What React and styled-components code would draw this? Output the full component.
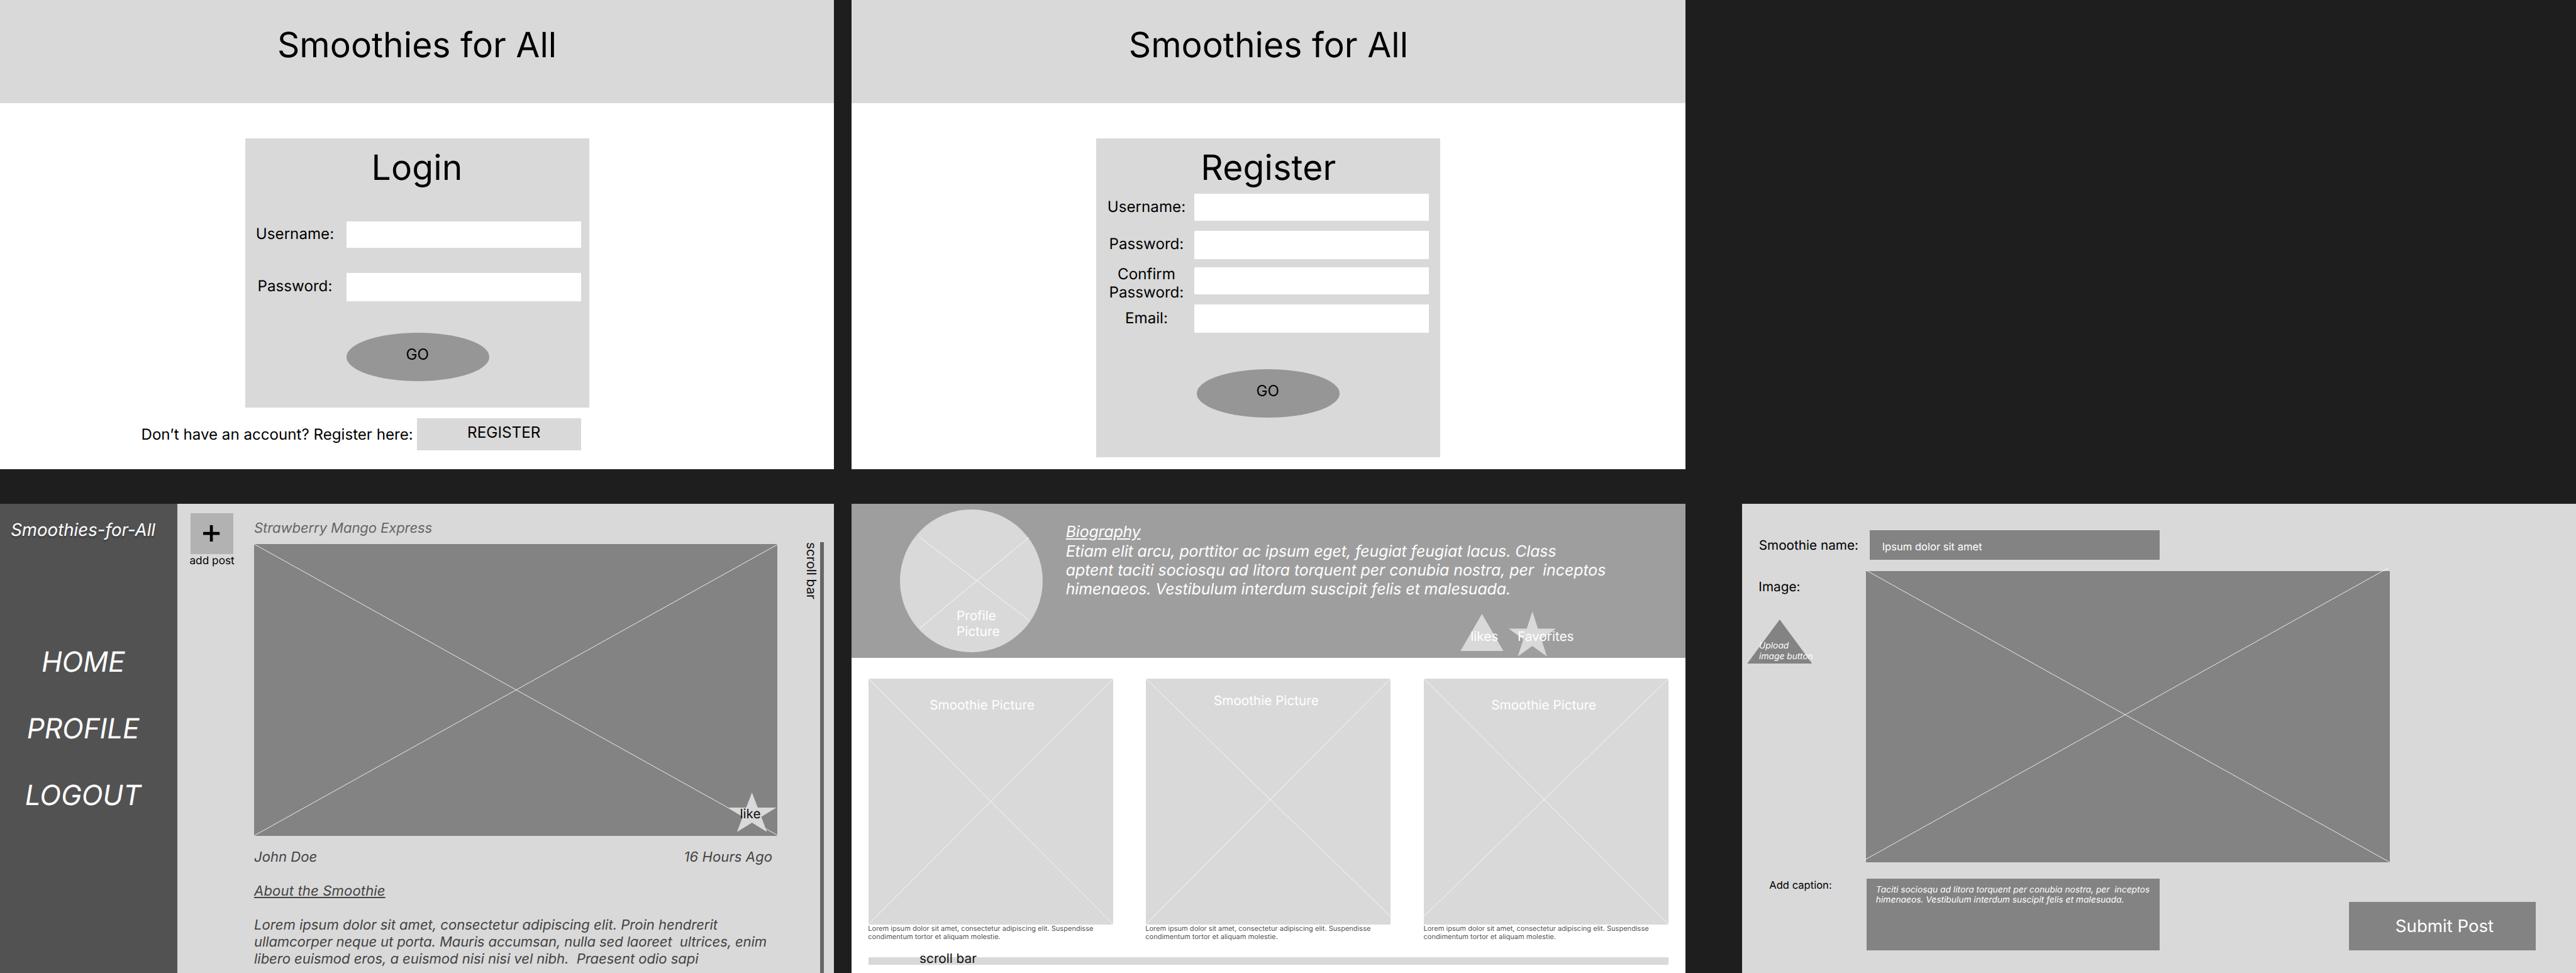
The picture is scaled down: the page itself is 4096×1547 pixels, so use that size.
import React from "react";
import styled, { createGlobalStyle, css } from "styled-components";

const SCALE = 4096 / 5930;
const u = (n) => `${(n * SCALE).toFixed(3)}px`;

const GlobalStyle = createGlobalStyle`
  *, *::before, *::after { box-sizing: border-box; }
  html, body { margin: 0; padding: 0; background: #1e1e1e; }
  body {
    width: 4096px;
    height: 1547px;
    overflow: hidden;
    font-family: Inter, "Liberation Sans", sans-serif;
    text-rendering: geometricPrecision;
    color: #000;
  }
`;

const type = (size, line = size * 1.21) => css`
  font-size: ${u(size)};
  line-height: ${u(line)};
  white-space: pre;
`;

/* ---------- board ---------- */

const Board = styled.main`
  width: 4096px;
  height: 1547px;
  display: flex;
  flex-direction: column;
  gap: ${u(80)};
  overflow: hidden;
`;

const BoardRow = styled.div`
  display: flex;
  gap: ${u(40)};
  flex: none;
`;

const Frame = styled.section`
  width: ${u(1920)};
  height: ${u(1080)};
  flex: none;
  display: flex;
  flex-direction: ${(p) => p.$direction || "column"};
  background: ${(p) => p.$bg || "#fff"};
  margin-left: ${(p) => u(p.$indent || 0)};
  overflow: hidden;
`;

const Line = styled.span`
  display: block;
  letter-spacing: ${(p) => p.$track || 0}em;
`;

/* ---------- login and register ---------- */

const AppHeader = styled.header`
  height: ${u(237)};
  flex: none;
  padding-top: ${u(56)};
  background: #d9d9d9;
  text-align: center;
`;

const Title = styled.h1`
  ${type(80)}
  margin: 0;
  font-weight: 400;
  text-align: center;
`;

const CardTitle = styled(Title)`
  letter-spacing: 0.003em;
`;

const AuthCard = styled.form`
  width: ${u(792)};
  height: ${(p) => u(p.$height)};
  margin: ${u(82)} auto 0;
  padding-top: ${u(20.3)};
  flex: none;
  display: flex;
  flex-direction: column;
  background: #d9d9d9;
`;

const FieldRow = styled.label`
  display: flex;
  align-items: flex-start;
  height: ${(p) => u(p.$height)};
  margin-top: ${(p) => u(p.$top)};
`;

const FieldLabel = styled.span`
  ${type(35)}
  width: ${(p) => u(p.$width)};
  padding-left: ${(p) => u(p.$start || 0)};
  padding-right: ${(p) => u(p.$end || 0)};
  margin-top: ${(p) => u(p.$shift)};
  flex: none;
  text-align: center;
`;

const FieldBox = styled.span`
  width: ${u(540)};
  height: 100%;
  background: #fff;
`;

const GoButton = styled.button`
  ${type(35)}
  width: ${u(329)};
  height: ${u(111)};
  margin: ${(p) => u(p.$top)} 0 0 ${(p) => u(p.$left)};
  padding: 0 ${u(2)} ${u(11)} 0;
  border: 0;
  border-radius: 50%;
  background: #969696;
  color: #000;
  font-family: inherit;
`;

const SignupRow = styled.div`
  display: flex;
  align-items: flex-start;
  margin-top: ${u(25)};
  padding-left: ${u(325)};
`;

const SignupPrompt = styled.span`
  ${type(34.95)}
  width: ${u(635)};
  margin-top: ${u(15.3)};
`;

const SignupButton = styled.button`
  ${type(35.2)}
  width: ${u(377.5)};
  height: ${u(73)};
  padding: 0 0 ${u(7)} ${u(22.5)};
  border: 0;
  background: #d9d9d9;
  color: #000;
  font-family: inherit;
`;

/* ---------- feed ---------- */

const Sidebar = styled.aside`
  width: ${u(408)};
  padding: ${u(36.6)} ${u(25.5)} 0 0;
  flex: none;
  display: flex;
  flex-direction: column;
  align-items: center;
  background: #525252;
  color: #fff;
  font-style: italic;
`;

const Brand = styled.div`
  ${type(40)}
  text-shadow: 0 ${u(4)} ${u(4)} rgba(0, 0, 0, 0.25);
`;

const SideNav = styled.nav`
  display: flex;
  flex-direction: column;
  align-items: center;
  gap: ${u(76.6)};
  margin-top: ${u(239.8)};
`;

const NavItem = styled.a`
  ${type(64)}
  letter-spacing: -0.004em;
`;

const AddPost = styled.div`
  width: ${u(177)};
  padding: ${u(22)} ${u(17)} 0 0;
  flex: none;
  display: flex;
  flex-direction: column;
  align-items: center;
`;

const AddButton = styled.button`
  width: ${u(98)};
  height: ${u(94)};
  padding: 0 ${u(1.5)} ${u(2)} 0;
  border: 0;
  display: flex;
  align-items: center;
  justify-content: center;
  background: #b2b2b2;
`;

const PlusIcon = styled.svg`
  width: ${u(38)};
  height: ${u(38)};
  display: block;
`;

const AddCaption = styled.span`
  ${type(25)}
  margin-top: ${u(1.2)};
`;

const Post = styled.article`
  width: ${u(1205)};
  padding-top: ${u(37.3)};
  flex: none;
  color: #434343;
  font-style: italic;
`;

const PostTitle = styled.div`
  ${type(32)}
  color: #666;
  letter-spacing: -0.005em;
`;

const PostImage = styled.div`
  position: relative;
  height: ${u(671.3)};
  margin-top: ${u(17)};
  background: #838383;
`;

const PostMeta = styled.div`
  ${type(32)}
  display: flex;
  justify-content: space-between;
  margin-top: ${u(30.5)};
  padding-right: ${u(12)};
`;

const PostHeading = styled.div`
  ${type(32)}
  margin-top: ${u(39.3)};
  letter-spacing: 0.006em;
  text-decoration: underline;
`;

const PostBody = styled.div`
  ${type(32, 39)}
  margin-top: ${u(39.3)};
`;

const LikeBadge = styled.div`
  position: absolute;
  left: ${u(1090)};
  top: ${u(570.7)};
  width: ${u(112)};
  height: ${u(91)};
  color: #111;
  font-style: normal;
`;

const ScrollRail = styled.div`
  display: flex;
  align-items: flex-start;
  padding: ${u(88)} 0 0 ${u(56.5)};
`;

const ScrollRailLabel = styled.span`
  ${type(30)}
  width: ${u(41.5)};
  padding-right: ${u(1.5)};
  writing-mode: vertical-rl;
  color: #111;
`;

const ScrollRailTrack = styled.span`
  width: ${u(8)};
  height: ${u(992)};
  background: #666;
`;

/* ---------- profile ---------- */

const ProfileHeader = styled.header`
  height: ${u(354)};
  flex: none;
  display: flex;
  background: #9e9e9e;
  color: #fff;
`;

const Avatar = styled.div`
  position: relative;
  width: ${u(328)};
  height: ${u(328)};
  margin: ${u(13)} 0 0 ${u(112)};
  flex: none;
  border-radius: 50%;
  background: #d9d9d9;
`;

const Bio = styled.div`
  margin-left: ${u(53.6)};
  padding-top: ${u(42)};
`;

const BioText = styled.div`
  ${type(36, 43.9)}
  font-style: italic;
`;

const BioHeading = styled(Line)`
  text-decoration: underline;
`;

const BadgeRow = styled.div`
  display: flex;
  align-items: flex-start;
  gap: ${u(11.3)};
  padding-left: ${u(908.2)};
  margin-top: ${u(29.4)};
`;

const Badge = styled.div`
  position: relative;
  width: ${(p) => u(p.$width)};
  height: ${(p) => u(p.$height)};
  margin-top: ${(p) => u(p.$top || 0)};
`;

const Shape = styled.svg`
  display: block;
  width: 100%;
  height: 100%;
`;

const Overlay = styled.span`
  ${(p) => type(p.$size || 30)}
  position: absolute;
  left: ${(p) => u(p.$x)};
  top: ${(p) => u(p.$y)};
`;

const Gallery = styled.div`
  display: grid;
  grid-template-columns: ${u(638.4)} ${u(640.3)} ${u(563.3)};
  padding: ${u(48.3)} 0 0 ${u(39.3)};
`;

const Card = styled.figure`
  width: ${u(563)};
  margin: 0;
`;

const CardPicture = styled.div`
  position: relative;
  height: ${u(565.4)};
  background: #d9d9d9;
  color: #fff;
`;

const CardCaption = styled.figcaption`
  ${type(16)}
  margin: ${u(0.6)} 0 0 ${u(-1)};
  color: #525252;
`;

const GalleryScroll = styled.div`
  position: relative;
  width: ${u(1842)};
  height: ${u(17.5)};
  margin: ${u(36.8)} 0 0 ${u(39.3)};
  background: #d9d9d9;
  color: #111;
`;

/* ---------- new post ---------- */

const FormLine = styled.div`
  display: flex;
  align-items: flex-start;
  padding-top: ${(p) => u(p.$top)};
`;

const FormLabel = styled.div`
  ${(p) => type(p.$size)}
  width: ${(p) => u(p.$width)};
  padding-left: ${(p) => u(p.$start)};
  margin-top: ${(p) => u(p.$shift)};
  flex: none;
`;

const NameInput = styled.div`
  ${type(24)}
  width: ${u(668.5)};
  height: ${u(68)};
  padding: ${u(23.3)} 0 0 ${u(29)};
  background: #838383;
  color: #fff;
`;

const UploadColumn = styled.div`
  width: ${u(286)};
  padding-top: ${u(17)};
  flex: none;
`;

const UploadButton = styled.div`
  position: relative;
  width: ${u(150)};
  height: ${u(101.7)};
  margin: ${u(58.5)} 0 0 ${u(11.5)};
  color: #fff;
  font-style: italic;
`;

const ImagePreview = styled.div`
  width: ${u(1205)};
  height: ${u(671.3)};
  background: #838383;
`;

const CaptionInput = styled.div`
  ${type(20)}
  width: ${u(675)};
  height: ${u(166)};
  padding: ${u(14.5)} 0 0 ${u(21.5)};
  background: #838383;
  color: #fff;
  font-style: italic;
`;

const SubmitButton = styled.button`
  ${type(40)}
  width: ${u(429)};
  height: ${u(112)};
  margin: ${u(54)} 0 0 ${u(436)};
  padding: 0 0 0 ${u(10)};
  border: 0;
  background: #838383;
  color: #fff;
  font-family: inherit;
`;

/* ---------- drawings ---------- */

const CrossSvg = styled.svg`
  display: block;
  width: 100%;
  height: 100%;
  overflow: visible;
  stroke: #fff;
  stroke-width: 1.2;
`;

function Cross({ w, h, lines }) {
  return (
    <CrossSvg viewBox={`0 0 ${w} ${h}`} preserveAspectRatio="none">
      {lines.map(([x1, y1, x2, y2]) => (
        <line key={`${x1}-${y1}`} x1={x1} y1={y1} x2={x2} y2={y2} />
      ))}
    </CrossSvg>
  );
}

function Star() {
  return (
    <Shape viewBox="0 0 1000 1000" preserveAspectRatio="none">
      <polygon
        fill="#d9d9d9"
        points="500,0 618,382 1000,382 691,618 809,1000 500,764 191,1000 309,618 0,382 382,382"
      />
    </Shape>
  );
}

function Triangle({ fill }) {
  return (
    <Shape viewBox="0 0 100 100" preserveAspectRatio="none">
      <polygon fill={fill} points="50,0 100,100 0,100" />
    </Shape>
  );
}

function Plus() {
  return (
    <PlusIcon viewBox="0 0 38 38">
      <path d="M19 0V38M0 19H38" stroke="#000" strokeWidth="6.8" />
    </PlusIcon>
  );
}

/* ---------- screens ---------- */

function LoginScreen() {
  return (
    <Frame>
      <AppHeader>
        <Title>Smoothies for All</Title>
      </AppHeader>
      <AuthCard $height={619}>
        <CardTitle>Login</CardTitle>
        <FieldRow $top={72.9} $height={62}>
          <FieldLabel $width={233.5} $end={3.5} $shift={7.8}>Username:</FieldLabel>
          <FieldBox />
        </FieldRow>
        <FieldRow $top={57} $height={65}>
          <FieldLabel $width={233.5} $end={3.5} $shift={9.8}>Password:</FieldLabel>
          <FieldBox />
        </FieldRow>
        <GoButton type="button" $top={73} $left={233.5}>GO</GoButton>
      </AuthCard>
      <SignupRow>
        <SignupPrompt>Don’t have an account? Register here:</SignupPrompt>
        <SignupButton>REGISTER</SignupButton>
      </SignupRow>
    </Frame>
  );
}

const registerFields = [
  { label: "Username:", top: 9.9, height: 62, shift: 8.3 },
  { label: "Password:", top: 23, height: 65, shift: 9.8 },
  { label: "Confirm\nPassword:", top: 20, height: 62, shift: -6.4 },
  { label: "Email:", top: 23, height: 65, shift: 9.8 },
];

function RegisterScreen() {
  return (
    <Frame>
      <AppHeader>
        <Title>Smoothies for All</Title>
      </AppHeader>
      <AuthCard $height={733}>
        <CardTitle>Register</CardTitle>
        {registerFields.map((f) => (
          <FieldRow key={f.label} $top={f.top} $height={f.height}>
            <FieldLabel $width={226} $start={4.5} $shift={f.shift}>{f.label}</FieldLabel>
            <FieldBox />
          </FieldRow>
        ))}
        <GoButton type="button" $top={84} $left={231}>GO</GoButton>
      </AuthCard>
    </Frame>
  );
}

function FeedScreen() {
  return (
    <Frame $direction="row" $bg="#d9d9d9">
      <Sidebar>
        <Brand>Smoothies-for-All</Brand>
        <SideNav>
          <NavItem>HOME</NavItem>
          <NavItem>PROFILE</NavItem>
          <NavItem>LOGOUT</NavItem>
        </SideNav>
      </Sidebar>
      <AddPost>
        <AddButton aria-label="add post">
          <Plus />
        </AddButton>
        <AddCaption>add post</AddCaption>
      </AddPost>
      <Post>
        <PostTitle>Strawberry Mango Express</PostTitle>
        <PostImage>
          <Cross w={1205} h={671} lines={[[0, 0, 1205, 670], [0, 671, 1205, 1]]} />
          <LikeBadge>
            <Star />
            <Overlay $x={28.3} $y={31}>like</Overlay>
          </LikeBadge>
        </PostImage>
        <PostMeta>
          <Line>John Doe</Line>
          <Line $track={0.003}>16 Hours Ago</Line>
        </PostMeta>
        <PostHeading>About the Smoothie</PostHeading>
        <PostBody>
          <Line $track={-0.0013}>Lorem ipsum dolor sit amet, consectetur adipiscing elit. Proin hendrerit</Line>
          <Line $track={-0.006}>{"ullamcorper neque ut porta. Mauris accumsan, nulla sed laoreet  ultrices, enim"}</Line>
          <Line $track={-0.003}>{"libero euismod eros, a euismod nisi nisi vel nibh.  Praesent odio sapi"}</Line>
        </PostBody>
      </Post>
      <ScrollRail>
        <ScrollRailLabel>scroll bar</ScrollRailLabel>
        <ScrollRailTrack />
      </ScrollRail>
    </Frame>
  );
}

const caption =
  "Lorem ipsum dolor sit amet, consectetur adipiscing elit. Suspendisse\ncondimentum tortor et aliquam molestie.";

const cards = [
  { x: 140.8, y: 41.7, lines: [[0, 0, 563, 565], [0, 565, 563, 0]] },
  { x: 156.5, y: 31.2, lines: [[0, 0, 563, 547], [0, 565, 563, 0]] },
  { x: 155, y: 41.7, lines: [[0, 0, 563, 565], [0, 547, 563, 0]] },
];

function ProfileScreen() {
  return (
    <Frame>
      <ProfileHeader>
        <Avatar>
          <Cross w={328} h={328} lines={[[45.3, 64, 296.6, 254.6], [45, 274, 297, 64]]} />
          <Overlay $x={130} $y={225.8}>{"Profile\nPicture"}</Overlay>
        </Avatar>
        <Bio>
          <BioText>
            <BioHeading $track={-0.006}>Biography</BioHeading>
            <Line $track={-0.003}>Etiam elit arcu, porttitor ac ipsum eget, feugiat feugiat lacus. Class</Line>
            <Line $track={-0.001}>{"aptent taciti sociosqu ad litora torquent per conubia nostra, per  inceptos"}</Line>
            <Line $track={-0.0025}>himenaeos. Vestibulum interdum suscipit felis et malesuada.</Line>
          </BioText>
          <BadgeRow>
            <Badge $width={99.5} $height={86} $top={6}>
              <Triangle fill="#d9d9d9" />
              <Overlay $x={23.5} $y={34}>likes</Overlay>
            </Badge>
            <Badge $width={108.7} $height={104}>
              <Star />
              <Overlay $x={21} $y={40}>Favorites</Overlay>
            </Badge>
          </BadgeRow>
        </Bio>
      </ProfileHeader>
      <Gallery>
        {cards.map((c, i) => (
          <Card key={i}>
            <CardPicture>
              <Cross w={563} h={565} lines={c.lines} />
              <Overlay $x={c.x} $y={c.y}>Smoothie Picture</Overlay>
            </CardPicture>
            <CardCaption>{caption}</CardCaption>
          </Card>
        ))}
      </Gallery>
      <GalleryScroll>
        <Overlay $x={117.5} $y={-15.5}>scroll bar</Overlay>
      </GalleryScroll>
    </Frame>
  );
}

function NewPostScreen() {
  return (
    <Frame $bg="#d9d9d9" $indent={90}>
      <FormLine $top={60}>
        <FormLabel $size={30} $width={293.7} $start={39} $shift={15.9}>Smoothie name:</FormLabel>
        <NameInput>Ipsum dolor sit amet</NameInput>
      </FormLine>
      <FormLine $top={26}>
        <UploadColumn>
          <FormLabel $size={30} $width={286} $start={38.5} $shift={0.3}>Image:</FormLabel>
          <UploadButton>
            <Triangle fill="#838383" />
            <Overlay $size={20} $x={28} $y={49.8}>{"Upload\nimage button"}</Overlay>
          </UploadButton>
        </UploadColumn>
        <ImagePreview>
          <Cross w={1205} h={671} lines={[[2, -1, 1205, 669.5], [-2, 664, 1202, -7]]} />
        </ImagePreview>
      </FormLine>
      <FormLine $top={36.7}>
        <FormLabel $size={24} $width={287} $start={63} $shift={0.3}>Add caption:</FormLabel>
        <CaptionInput>
          {"Taciti sociosqu ad litora torquent per conubia nostra, per  inceptos\nhimenaeos. Vestibulum interdum suscipit felis et malesuada."}
        </CaptionInput>
        <SubmitButton>Submit Post</SubmitButton>
      </FormLine>
    </Frame>
  );
}

export default function App() {
  return (
    <>
      <GlobalStyle />
      <Board>
        <BoardRow>
          <LoginScreen />
          <RegisterScreen />
        </BoardRow>
        <BoardRow>
          <FeedScreen />
          <ProfileScreen />
          <NewPostScreen />
        </BoardRow>
      </Board>
    </>
  );
}
